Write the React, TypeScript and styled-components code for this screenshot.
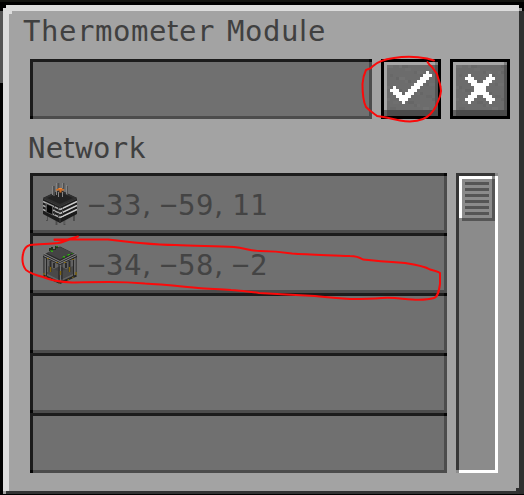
import React from "react";
import styled, { createGlobalStyle, css } from "styled-components";

const GlobalStyle = createGlobalStyle`
  * { box-sizing: border-box; }
  body { margin: 0; background: #000; overflow: hidden; }
`;

const Screen = styled.main`
  position: relative;
  width: 524px;
  height: 495px;
  padding: 5px 0 1px 3px;
  background:
    linear-gradient(#131410, #131410) 0 0 / 524px 2px no-repeat,
    linear-gradient(#555, #555) 0 11px / 3px 72px no-repeat,
    #000;
  font-family: "DejaVu Sans Mono", monospace;
  color: #404040;
`;

const Panel = styled.section`
  display: flex;
  flex-direction: column;
  width: 521px;
  height: 489px;
  padding: 6px 0 0 27px;
  background:
    linear-gradient(#000, #000) 0 0 / 3px 3px no-repeat,
    linear-gradient(#000, #000) 516px 0 / 5px 3px no-repeat,
    linear-gradient(#a3a3a3, #a3a3a3) 516px 3px / 3px 3px no-repeat,
    linear-gradient(#000, #000) 519px 3px / 2px 3px no-repeat,
    linear-gradient(#a3a3a3, #a3a3a3) 0 486px / 3px 3px no-repeat,
    linear-gradient(#dcdcdc, #dcdcdc) 6px 6px / 3px 3px no-repeat,
    linear-gradient(#2f3030, #2f3030) 513px 483px / 3px 3px no-repeat,
    linear-gradient(#dcdcdc, #dcdcdc) 0 0 / 516px 6px no-repeat,
    linear-gradient(#dcdcdc, #dcdcdc) 0 0 / 6px 486px no-repeat,
    linear-gradient(#2f3030, #2f3030) 516px 6px / 5px 483px no-repeat,
    linear-gradient(#323333, #323333) 3px 486px / 518px 3px no-repeat,
    #a3a3a3;
`;

const lettering = css`
  font-size: 29px;
  font-weight: 400;
  letter-spacing: 0.54px;
  word-spacing: -6px;
  line-height: 36px;
  white-space: pre;
`;

const Title = styled.h1`
  ${lettering}
  height: 36px;
  margin: 2px 0 10px -7px;
`;

const Subtitle = styled.h2`
  ${lettering}
  letter-spacing: 0.2px;
  height: 36px;
  margin: 11px 0 7px -2px;
`;

const Slim = styled.span<{ $gap: number }>`
  font-family: "DejaVu Sans", sans-serif;
  letter-spacing: ${(p) => p.$gap}px;
`;

const Controls = styled.div`
  display: flex;
  gap: 9px;
  height: 60px;
`;

const inset = css`
  position: relative;
  height: 60px;
  border: 3px solid;
  border-color: #1c1c1c #4c4c4c #4c4c4c #1c1c1c;
  background: #707070;
  &::before, &::after {
    content: "";
    position: absolute;
    width: 3px;
    height: 3px;
    background: #050505;
  }
  &::before { left: -3px; bottom: -3px; }
  &::after { right: -3px; top: -3px; }
`;

const Field = styled.input`
  width: 342px;
  height: 60px;
  border: 0;
  border-radius: 0;
  padding: 0 12px;
  outline: none;
  font: inherit;
  font-size: 29px;
  color: #404040;
  background:
    linear-gradient(#050505, #050505) 0 57px / 3px 3px no-repeat,
    linear-gradient(#050505, #050505) 339px 0 / 3px 3px no-repeat,
    linear-gradient(#1c1c1c, #1c1c1c) 0 0 / 339px 3px no-repeat,
    linear-gradient(#1c1c1c, #1c1c1c) 0 0 / 3px 57px no-repeat,
    linear-gradient(#4c4c4c, #4c4c4c) 3px 57px / 339px 3px no-repeat,
    linear-gradient(#4c4c4c, #4c4c4c) 339px 3px / 3px 57px no-repeat,
    #707070;
`;

const StoneButton = styled.button`
  width: 60px;
  height: 60px;
  padding: 0;
  border: 3px solid #000;
  border-radius: 0;
  background: #6b6b6b;
  svg { display: block; }
`;

const Body = styled.div`
  display: flex;
  gap: 9px;
`;

const Rows = styled.ul`
  width: 417px;
  margin: 0;
  padding: 0;
  list-style: none;
`;

const Row = styled.li`
  ${inset}
  display: flex;
  align-items: flex-start;
  padding-left: 9px;
  svg { display: block; flex: none; margin-top: 5px; }
`;

const Coordinates = styled.span`
  ${lettering}
  color: #444;
  margin: 11px 0 0 10px;
`;

const Track = styled.div`
  width: 42px;
  height: 300px;
  padding: 3px;
  background:
    linear-gradient(#8b8b8b, #8b8b8b) 39px 0 / 3px 3px no-repeat,
    linear-gradient(#8b8b8b, #8b8b8b) 0 297px / 3px 3px no-repeat,
    linear-gradient(#373737, #373737) 0 0 / 39px 3px no-repeat,
    linear-gradient(#373737, #373737) 0 0 / 3px 297px no-repeat,
    linear-gradient(#fff, #fff) 39px 3px / 3px 297px no-repeat,
    linear-gradient(#fff, #fff) 3px 297px / 39px 3px no-repeat,
    #8b8b8b;
`;

const Thumb = styled.div`
  display: flex;
  flex-direction: column;
  gap: 3px;
  width: 36px;
  height: 45px;
  padding: 6px;
  background:
    linear-gradient(#8b8b8b, #8b8b8b) 33px 0 / 3px 3px no-repeat,
    linear-gradient(#8b8b8b, #8b8b8b) 0 42px / 3px 3px no-repeat,
    linear-gradient(#fff, #fff) 0 0 / 33px 3px no-repeat,
    linear-gradient(#fff, #fff) 0 0 / 3px 42px no-repeat,
    linear-gradient(#555, #555) 33px 3px / 3px 42px no-repeat,
    linear-gradient(#555, #555) 3px 42px / 33px 3px no-repeat,
    #8b8b8b;
`;

const Grip = styled.i`
  height: 3px;
  background: #555;
`;

const Scribble = styled.svg`
  position: absolute;
  inset: 0;
  pointer-events: none;
`;

type Run = [row: number, start: number, end: number];

const checkRuns: Run[] = [
  [0, 12, 12], [1, 11, 13], [2, 10, 12], [3, 9, 11], [4, 8, 10],
  [5, 1, 1], [5, 7, 9], [6, 0, 2], [6, 6, 8], [7, 1, 3], [7, 5, 7],
  [8, 2, 6], [9, 3, 5], [10, 4, 4],
];

const crossRuns: Run[] = [
  [0, 1, 1], [0, 8, 8], [1, 0, 2], [1, 7, 9], [2, 1, 3], [2, 6, 8],
  [3, 2, 7], [4, 3, 6], [5, 3, 6], [6, 2, 7], [7, 1, 3], [7, 6, 8],
  [8, 0, 2], [8, 7, 9], [9, 1, 1], [9, 8, 8],
];

const speckles = Array.from({ length: 48 }, (_, i) => ({
  x: 3 + ((i * 21) % 48),
  y: 3 + ((i * 15 + Math.floor(i / 5) * 6) % 45),
  w: i % 3 === 0 ? 6 : 3,
  fill: ["#717171", "#666", "#6f6f6f", "#686868"][i % 4],
}));

function StoneFace({ runs, x, y }: { runs: Run[]; x: number; y: number }) {
  return (
    <svg width="54" height="54" shapeRendering="crispEdges" aria-hidden="true">
      <rect width="54" height="54" fill="#6c6c6c" />
      {speckles.map((s, i) => (
        <rect key={i} x={s.x} y={s.y} width={s.w} height="3" fill={s.fill} />
      ))}
      <path d="M0 0H54V3H3V54H0Z" fill="#a6a6a6" />
      <path d="M51 3h3v51h-3z" fill="#555" />
      <path d="M0 48H54V54H0Z" fill="#4b4b4b" />
      <path d="M0 48h3v6H0z" fill="#626262" />
      <path d="M51 0h3v3h-3z" fill="#808080" />
      {runs.map(([r, a, b]) => (
        <rect key={`${r}-${a}`} x={x + a * 3} y={y + r * 3} width={(b - a + 1) * 3} height="3" fill="#fff" />
      ))}
    </svg>
  );
}

function Reactor() {
  return (
    <svg width="36" height="46" viewBox="42 16 36 46" aria-hidden="true">
      <path d="M47 49v7M56.500 54v6M64.500 54v6M74 49v7" stroke="#4c4c4c" strokeWidth="1.800" />
      <path d="M46.500 49v6M65 54v5" stroke="#777" strokeWidth=".8" />
      <path d="M43 33L60 25L77 33V49L60 58L43 49Z" fill="#1c1c1c" />
      <path d="M43 33L60 25L77 33L60 41Z" fill="#303030" />
      <path d="M47 33L60 27L73 33L60 39Z" fill="#222" />
      <path d="M43 33.500L60 41.500L77 33.500" fill="none" stroke="#3d3d3d" />
      <path d="M60 42V58" stroke="#303030" strokeWidth="1.500" />
      <path d="M43 36.500L60 44.500L77 36.500M43 40.500L60 48.500L77 40.500M43 44.500L60 52.500L77 44.500" fill="none" stroke="#aaa" strokeWidth="1.400" />
      <path d="M60.500 44.500L77 36.500M60.500 48.500L77 40.500M60.500 52.500L77 44.500" fill="none" stroke="#d2d2d2" />
      <path d="M54.500 41v9M58.500 43v9M62.500 42v10" stroke="#444" strokeDasharray="1.500 1" />
      <path d="M45.500 38L53 41.500V50.500L45.500 47Z" fill="#555" />
      <path d="M47 39.500L52 41.500V49L47 47Z" fill="#070707" />
      <path d="M54 21v10M58.500 18v6M63.500 18v6M67 21v9" stroke="#505050" strokeWidth="1.800" />
      <path d="M52.500 21v9M56.500 18v12M62.500 18v5M66.500 20v9M58.500 27v5M62.500 27v5" stroke="#858585" />
      <path d="M56 24h2v-1h4v1h2v1.500h-2.500v2h-2v-2H56z" fill="#cf6e25" />
      <path d="M59 23h3v1h-3z" fill="#f28c3f" />
    </svg>
  );
}

function Terrarium() {
  return (
    <svg width="36" height="46" viewBox="42 76 36 46" aria-hidden="true">
      <path d="M43 91L60 99L77 91V110L60 119L43 110Z" fill="#626262" />
      <path d="M46 108L60 101L74 108L60 115Z" fill="#414141" />
      <path d="M48 101L58 106V114L48 109ZM62 106L73 101V109L62 114Z" fill="#494949" />
      <path d="M43.500 110.500L60 118L76.500 110.500" fill="none" stroke="#252525" strokeWidth="2" />
      <path d="M45 111L60 118.500L76 111" fill="none" stroke="#786012" strokeDasharray="2 3" />
      <path d="M44 92v18M46.500 93v18M59 99v19M62 99v18M73.500 93v18M76 92v18" stroke="#272727" />
      <path d="M45.300 93v17M60.500 100v17M75 93v17" stroke="#707070" />
      <path d="M50.500 96v11M54 98v5M66 98v5M69.500 96v11" stroke="#2c2c2c" strokeWidth="2" />
      <path d="M50.500 102v5M69.500 102v5M60.500 106v4M44 108v2M76 107v3" stroke="#80650c" strokeWidth="1.400" />
      <path d="M43 90L60 81.500L77 90V92L60 100L43 92Z" fill="#292929" />
      <path d="M43.500 90.500L60 98.500L76.500 90.500M44 88.500L60 96.500L76 88.500" fill="none" stroke="#858585" />
      <path d="M47 88L60 82L73 88L60 94.500Z" fill="#444" />
      <path d="M49 83h2v-1h2v2h2v-3h3v2h-2v2h-3v1h-4z" fill="#20301b" />
      <path d="M50 85h3v1h-3zM56 81h2v1h-2zM67 89h2v2h-2zM62 92h3v1h-3zM71 88h2v1h-2z" fill="#287716" />
      <path d="M51 86h2v1h-2zM68 89h2v1h-2zM63 91h2v1h-2z" fill="#38a51b" />
      <path d="M47 93h2v1h-2zM56 97h2v1h-2zM64 97h2v1h-2zM72 94h2v1h-2z" fill="#80630e" />
    </svg>
  );
}

const Comma = () => <Slim $gap={-3.22}>,</Slim>;
const SlimT = () => <Slim $gap={0.63}>t</Slim>;

export default function App() {
  return (
    <>
      <GlobalStyle />
      <Screen>
        <Panel>
          <Title>Thermome<SlimT />er Modu<Slim $gap={0.94}>l</Slim>e</Title>
          <Controls>
            <Field aria-label="Name" />
            <StoneButton aria-label="Confirm"><StoneFace runs={checkRuns} x={6} y={9} /></StoneButton>
            <StoneButton aria-label="Cancel"><StoneFace runs={crossRuns} x={12} y={12} /></StoneButton>
          </Controls>
          <Subtitle>Ne<SlimT />work</Subtitle>
          <Body>
            <Rows>
              <Row>
                <Reactor />
                <Coordinates>−33<Comma /> −59<Comma /> 11</Coordinates>
              </Row>
              <Row>
                <Terrarium />
                <Coordinates>−34<Comma /> −58<Comma /> −2</Coordinates>
              </Row>
              <Row />
              <Row />
              <Row />
            </Rows>
            <Track>
              <Thumb>{Array.from({ length: 6 }, (_, i) => <Grip key={i} />)}</Thumb>
            </Track>
          </Body>
        </Panel>
        <Scribble width="524" height="495" fill="none" stroke="#fb0a0a" strokeWidth="2" strokeLinecap="round" strokeLinejoin="round" aria-hidden="true">
          <path d="M434 60.500L427 58.500C416 56.500 404 56.500 394 58C387 59 378 61 373 66C371 69 368 69 366 70C364 74 363 77 362.500 84C362.500 91 363 101 366 107C370 111 373 113 377 116C386 117 392 119 400 120.500C409 122 416 122 423 119C431 116 434 110 436 106C440 97 442 92 440.500 87C440 82 438 79 437 74C434 70 433 68 431 66C429 65 429 64 427.500 62" />
          <path d="M78 236.500L66 240H54.500M54.500 239.500L108 239.500C121 241 130 242 140 243C151 244 162 245 175 245C197 246 216 246 234 247C245 248 251 251 260 251C274 251 282 252 292 253.500C310 255 330 255 350 256C356 256 359 257 363 259.500C376 261 390 262 405 263C418 265 426 267 430 269.500C434 271 438 271 440 273V284C439 291 438 297 434 298C427 300 420 300 412 299.500C402 299 394 297 382 298C370 299 359 299 350 299C337 298 325 297 315 296C293 295 275 294 259 293C244 291 236 290 231 290C218 289 207 289 198 288C177 286 158 284 145 283.500C128 282 118 282 109 282C95 282 82 282 72 282.500C61 282 50 280 43 277C35 275 30 273 26 270C22 265 22 259 23 254C24 248 26 246 30 245C40 244 51 244 58 243C64 242 70 239 78 236.500" />
        </Scribble>
      </Screen>
    </>
  );
}
